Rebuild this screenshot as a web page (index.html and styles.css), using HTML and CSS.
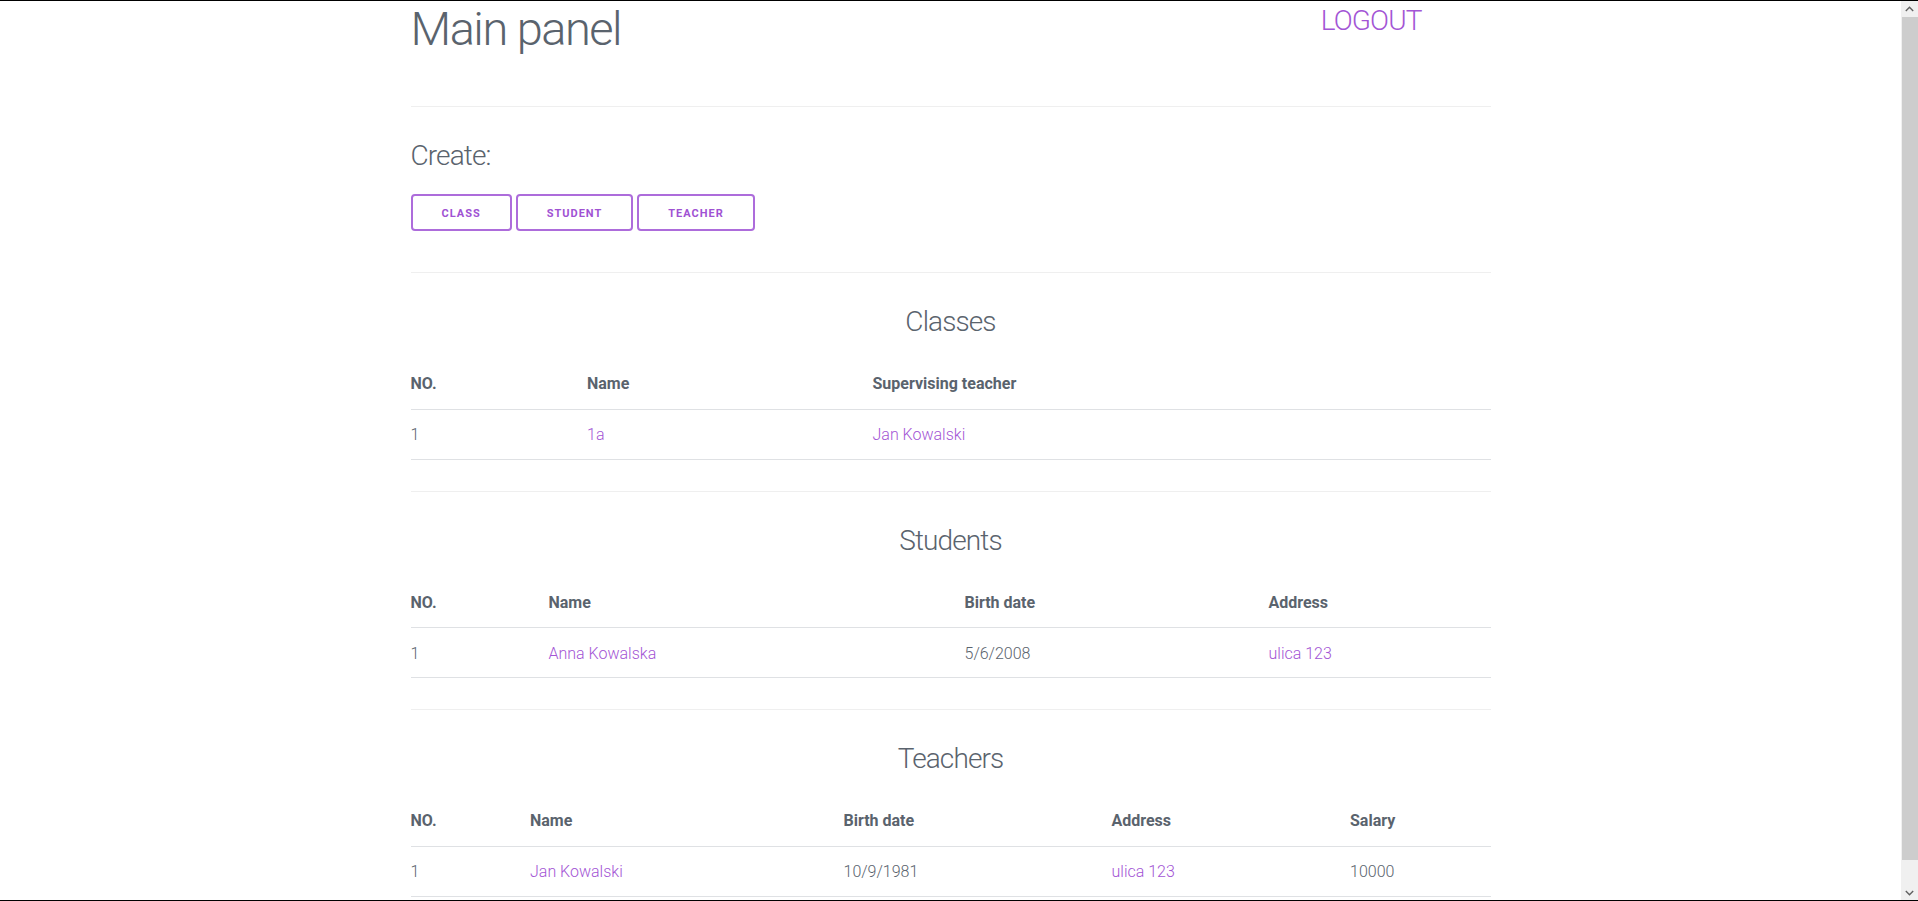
FILE: index.html
```html
<!DOCTYPE html>
<html lang="en">
<head>
<meta charset="utf-8">
<title>Main panel</title>
<link rel="stylesheet" href="styles.css">
</head>
<body>
<div class="scrollbar" aria-hidden="true">
  <div class="sb-btn"><svg width="9" height="6" viewBox="0 0 9 6"><path d="M0.8 5 L4.5 1.3 L8.2 5" stroke="#606060" stroke-width="1.4" fill="none"/></svg></div>
  <div class="sb-track"><div class="sb-thumb"></div></div>
  <div class="sb-btn"><svg width="9" height="6" viewBox="0 0 9 6"><path d="M0.8 1 L4.5 4.7 L8.2 1" stroke="#606060" stroke-width="1.4" fill="none"/></svg></div>
</div>
<div class="frame"></div>
<div class="container">
  <header class="header">
    <h1 class="title">Main panel</h1>
    <a class="logout" href="#">LOGOUT</a>
  </header>
  <hr class="divider">
  <section class="create">
    <h3 class="create-title">Create:</h3>
    <div class="btn-row">
      <button class="btn">Class</button>
      <button class="btn">Student</button>
      <button class="btn">Teacher</button>
    </div>
  </section>
  <hr class="divider">
  <section class="section">
    <h3 class="section-title">Classes</h3>
    <table class="table">
      <colgroup><col class="cl1"><col class="cl2"><col class="cl3"></colgroup>
      <thead><tr><th>NO.</th><th>Name</th><th>Supervising teacher</th></tr></thead>
      <tbody><tr><td>1</td><td><a href="#">1a</a></td><td><a href="#">Jan Kowalski</a></td></tr></tbody>
    </table>
  </section>
  <hr class="divider">
  <section class="section">
    <h3 class="section-title">Students</h3>
    <table class="table">
      <colgroup><col class="st1"><col class="st2"><col class="st3"><col class="st4"></colgroup>
      <thead><tr><th>NO.</th><th>Name</th><th>Birth date</th><th>Address</th></tr></thead>
      <tbody><tr><td>1</td><td><a href="#">Anna Kowalska</a></td><td>5/6/2008</td><td><a href="#">ulica 123</a></td></tr></tbody>
    </table>
  </section>
  <hr class="divider">
  <section class="section">
    <h3 class="section-title">Teachers</h3>
    <table class="table">
      <colgroup><col class="te1"><col class="te2"><col class="te3"><col class="te4"><col class="te5"></colgroup>
      <thead><tr><th>NO.</th><th>Name</th><th>Birth date</th><th>Address</th><th>Salary</th></tr></thead>
      <tbody><tr><td>1</td><td><a href="#">Jan Kowalski</a></td><td>10/9/1981</td><td><a href="#">ulica 123</a></td><td>10000</td></tr></tbody>
    </table>
  </section>
</div>
</body>
</html>
```
FILE: styles.css
```css
* { box-sizing: border-box; }
html, body { margin: 0; padding: 0; background: #fff; }

body {
  padding-right: 17px;
  font-family: Roboto, "Liberation Sans", sans-serif;
  color: #5a636d;
  font-size: 16px;
  line-height: 1.5;
}
a { color: #a355d5; text-decoration: none; }

/* window chrome: frame lines and classic scrollbar */
.frame {
  position: fixed;
  inset: 0;
  border-top: 1px solid #000;
  border-bottom: 1px solid #000;
  pointer-events: none;
  z-index: 10;
}
.scrollbar {
  position: fixed;
  top: 0;
  right: 0;
  bottom: 0;
  width: 17px;
  background: #f0f0f0;
  display: flex;
  flex-direction: column;
  z-index: 5;
}
.sb-btn {
  height: 17px;
  display: flex;
  align-items: center;
  justify-content: center;
  flex: none;
}
.sb-track { flex: 1; }
.sb-thumb {
  margin-left: 1px;
  height: 97.2%;
  background: #cdcdcd;
}

.container {
  width: 1080px;
  margin: 0 auto;
}

.header {
  display: flex;
  justify-content: space-between;
  align-items: flex-start;
  height: 106px;
  padding-top: 1px;
}
.title {
  margin: 0;
  font-size: 47px;
  font-weight: 300;
  line-height: 1.2;
  letter-spacing: -0.032em;
}
.logout {
  margin: 2.5px 69px 0 0;
  font-size: 28px;
  font-weight: 300;
  line-height: 1.2;
  letter-spacing: -0.032em;
}

.divider {
  margin: 0;
  border: 0;
  border-top: 1px solid #efefef;
  height: 0;
}

.create { padding: 31.5px 0 41px; }
.create-title {
  margin: 0 0 22px;
  font-size: 28px;
  font-weight: 300;
  line-height: 1.2;
  letter-spacing: -0.032em;
}
.btn-row { display: flex; gap: 4px; }
.btn {
  height: 37px;
  padding: 1px 29px 0;
  background: #fff;
  border: 2px solid #ad6cdb;
  border-radius: 4px;
  color: #a052d3;
  font-family: Roboto, "Liberation Sans", sans-serif;
  font-size: 11px;
  font-weight: 700;
  letter-spacing: 1px;
  text-transform: uppercase;
  cursor: pointer;
}

.section { padding: 32px 0 31px; }
.section-title {
  margin: 0 0 21px;
  text-align: center;
  font-size: 28px;
  font-weight: 300;
  line-height: 1.2;
  letter-spacing: -0.032em;
}

.table {
  width: 100%;
  border-collapse: collapse;
  table-layout: fixed;
}
.table th, .table td {
  text-align: left;
  padding: 12.5px 12px 12.5px 0;
  line-height: 24px;
  border-bottom: 1px solid #dfe1e4;
  white-space: nowrap;
}
.table th { font-weight: 700; }
.table td { font-weight: 300; padding-top: 13.5px; padding-bottom: 11.5px; }

.cl1 { width: 176.5px; }
.cl2 { width: 285.5px; }
.cl3 { width: 618px; }

.st1 { width: 138px; }
.st2 { width: 416px; }
.st3 { width: 304px; }
.st4 { width: 222px; }

.te1 { width: 119.5px; }
.te2 { width: 313.5px; }
.te3 { width: 268px; }
.te4 { width: 238.5px; }
.te5 { width: 140.5px; }
```
